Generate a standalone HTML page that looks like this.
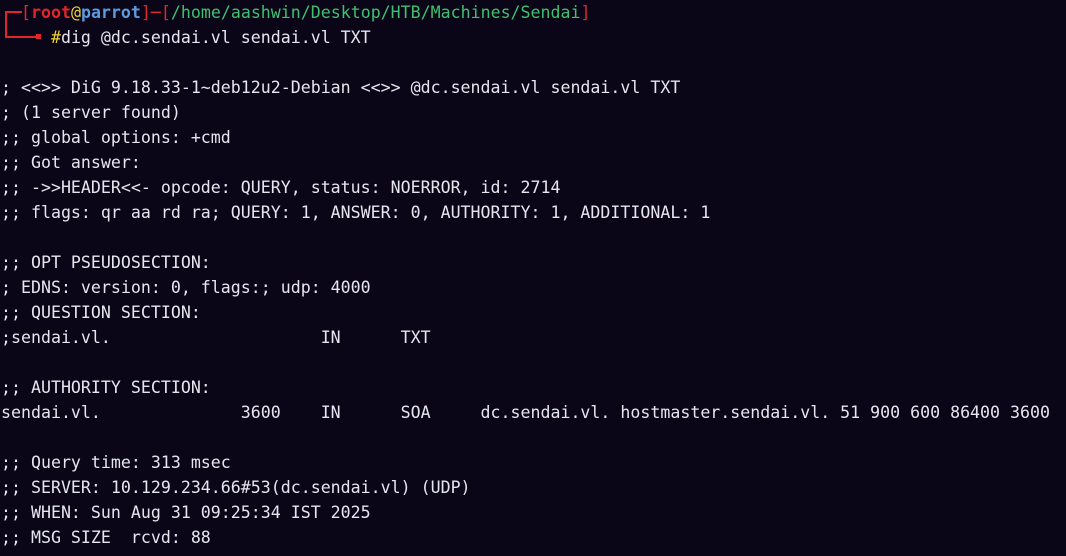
<!DOCTYPE html>
<html><head><meta charset="utf-8"><style>
html,body{margin:0;padding:0;background:#0a0618;width:1066px;height:556px;overflow:hidden}
pre{position:absolute;left:1px;top:0;margin:0;font-family:"DejaVu Sans Mono","Liberation Mono",monospace;font-size:16.6px;line-height:25px;color:#e6e6ee;white-space:pre}
.r{color:#e0262c}.rb{color:#e0262c;font-weight:bold}.y{color:#f0d030}.b{color:#5b9be0;font-weight:bold}.g{color:#3fc070}
.ln{position:absolute;background:#e0262c}
</style></head><body>
<div class="ln" style="left:5px;top:11px;width:2px;height:27px"></div>
<div class="ln" style="left:5px;top:11px;width:17px;height:2px"></div>
<div class="ln" style="left:5px;top:36px;width:33px;height:2px"></div>
<div class="ln" style="left:36px;top:34px;width:5px;height:5px"></div>
<pre>  <span class="r">[</span><span class="rb">root</span><span class="y">@</span><span class="b">parrot</span><span class="r">]─[</span><span class="g">/home/aashwin/Desktop/HTB/Machines/Sendai</span><span class="r">]</span>
     <span class="y">#</span>dig @dc.sendai.vl sendai.vl TXT

; &lt;&lt;&gt;&gt; DiG 9.18.33-1~deb12u2-Debian &lt;&lt;&gt;&gt; @dc.sendai.vl sendai.vl TXT
; (1 server found)
;; global options: +cmd
;; Got answer:
;; -&gt;&gt;HEADER&lt;&lt;- opcode: QUERY, status: NOERROR, id: 2714
;; flags: qr aa rd ra; QUERY: 1, ANSWER: 0, AUTHORITY: 1, ADDITIONAL: 1

;; OPT PSEUDOSECTION:
; EDNS: version: 0, flags:; udp: 4000
;; QUESTION SECTION:
;sendai.vl.                     IN      TXT

;; AUTHORITY SECTION:
sendai.vl.              3600    IN      SOA     dc.sendai.vl. hostmaster.sendai.vl. 51 900 600 86400 3600

;; Query time: 313 msec
;; SERVER: 10.129.234.66#53(dc.sendai.vl) (UDP)
;; WHEN: Sun Aug 31 09:25:34 IST 2025
;; MSG SIZE  rcvd: 88
</pre>
</body></html>
